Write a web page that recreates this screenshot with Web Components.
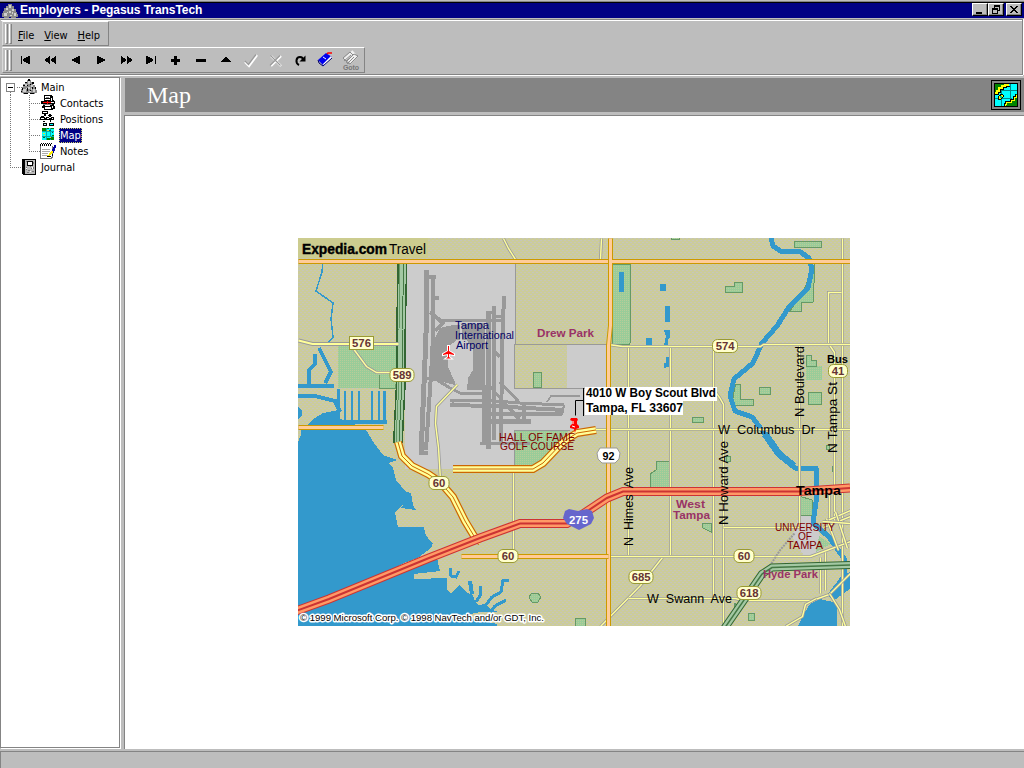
<!DOCTYPE html>
<html lang="en"><head><meta charset="utf-8"><title>Employers - Pegasus TransTech</title>
<style>html,body{margin:0;height:100%;overflow:hidden;background:#bdbdbd}</style></head>
<body><app-window></app-window>
<script>
const define=(name,html,setup)=>customElements.define(name,class extends HTMLElement{
  constructor(){super();this.attachShadow({mode:'open'}).innerHTML=typeof html==='function'?html(this):html;if(setup)setup(this)}
});

/* ---------- icons ---------- */
const S=(w,h,b,extra='')=>`<svg width="${w}" height="${h}" viewBox="0 0 ${w} ${h}" shape-rendering="crispEdges" ${extra}>${b}</svg>`;
const pegs=`<path fill="#8a8a8a" d="M6 1h4v2h2v3h2v3h1v2h1v3h-2v1H9v-1H7v1H2v-1H0v-4h1V8h1V5h2V3h2z"/><path fill="#d0d0d0" d="M7 2h2v3H7zM4 5h2v2H4zM10 6h2v2h-2zM2 10h3v3H2zM7 8h2v2H7zM12 10h2v3h-2zM8 12h2v1H8zM5 9h1v1H5zM10 9h1v2h-1z"/>`;
const art={
 main:pegs+`<path d="M7 0h2v2H7zM4 3h2v1H4zM11 3h2v2h-2zM2 6h2v1H2zM6 6h1v1H6zM9 5h1v1H9zM1 9h1v2H1zM6 9h1v3H6zM11 8h1v2h-1zM14 8h1v2h-1zM3 14h4v1H3zM9 14h4v1H9zM0 12h1v1H0zM9 11h1v1H9z"/>`,
 contacts:`<path d="M3 0h7l2 2v3l2 1v3l-2 1 2 2v2h-2v1H3v-2H1v-2h1V9H0V6h3z"/><path fill="#fff" d="M4 1h5v2H4zM10 3h1v3h-1zM4 4h5v1H4zM4 10h5v1H4zM4 12h6v2H4zM11 11h1v2h-1zM10 7h3v1h-3z"/><path fill="#f00" d="M2 7h8v1H2zM6 6h1v3H6z"/><path fill="#888" d="M2 9h9v1H2zM5 2h3v1H5z"/>`,
 positions:`<path d="M2 0h6v3H2zM4 3h2v2H4zM9 3h2v1h1v1h-1v1H9V5H8V4h1zM1 5h3v1h1v3H0V6h1zM6 6h3v1h1v2H5V7h1zM11 6h3v3h-4V7h1zM3 10h2v1H3zM10 9h1v2h-1zM3 12h4v3H3zM9 12h5v3H9z"/><path fill="#fff" d="M3 1h4v1H3zM1 7h3v1H1zM7 7h2v1H7zM12 7h1v1h-1z"/><path fill="#bff" d="M4 13h2v1H4z"/><path fill="#0ff" d="M10 13h3v1h-3z"/>`,
 map:`<path fill="#0ff" d="M1 1h12v12H1z"/><path fill="#008400" d="M1 1h7v1H5v2H3v1H1zM13 8v5H6v-2h3v-1h2V8zM10 1h3v1h-3z"/><path fill="#08a8aa" d="M5 1h1v12H5zM9 1h1v12H9zM1 4h12v1H1zM1 9h12v1H1z"/><path fill="#dd4" d="M6 3h2v1H6zM2 6h2v1H2zM9 10h1v1H9zM3 8h1v1H3z"/><path fill="#064" d="M8 3h2v1H8zM2 10h2v1H2zM8 11h2v1H8zM11 5h1v1h-1z"/>`,
 notes:`<path fill="#777" d="M0 3h13v11l-2 2H0z"/><path fill="#fff" d="M1 3h11v10l-2 2H1z"/><path fill="#aaa" d="M2 6h8v1H2zM2 8h8v1H2zM2 10h6v1H2zM2 12h5v1H2z"/><path d="M1 0h1v1H1zM3 0h1v1H3zM5 0h1v1H5zM7 0h1v1H7zM9 0h1v1H9zM11 0h1v1h-1zM0 1h1v2H0zM2 1h1v2H2zM4 1h1v2H4zM6 1h1v2H6zM8 1h1v2H8zM10 1h1v2h-1zM7 13h4v1H7zM12 11h1v2h-1z"/><path fill="#fe0" d="M11 8h2v2h-1v1h-1v1h-1v1H7v-1h2v-2h1V9h1z"/><path fill="#0000a4" d="M14 2h2v3h-1v3h-1v2h-1V8h-1V6h1V4h1z"/>`,
 journal:`<path d="M0 0h14v16H1v-1H0z"/><path fill="#bbb" d="M3 1h10v14H3z"/><path fill="#777" d="M4 2h1v1H4zM9 9h1v1H9zM6 11h2v1H6zM4 8h1v3H4zM10 12h2v1h-2zM5 13h2v1H5zM8 7h1v1H8zM11 3h1v2h-1zM11 8h1v2h-1z"/><path d="M5 2h6v5H5z"/><path fill="#fff" d="M6 3h4v3H6zM4 9h1v1H4zM8 12h1v1H8zM10 8h1v2h-1z"/>`
};

define('title-bar',`<style>
:host{display:flex;align-items:center;height:15px;background:#000084;border-top:1px solid #000;box-shadow:0 -1px #848484;margin-top:2px;color:#fff;font:bold 12px "Liberation Sans",sans-serif}
.app{margin:0 2px 0 2px;height:15px}b{letter-spacing:-.05px;flex:1;position:relative;top:-1px}
.btns{display:flex;padding-right:2px;position:relative;top:-1px}.b{width:16px;height:13px;box-sizing:border-box;background:#bdbdbd;border:1px solid;border-color:#fff #000 #000 #fff;box-shadow:inset -1px -1px #848484}.b:last-child{margin-left:2px}svg{display:block}</style>
<svg class="app" width="16" height="15" viewBox="0 0 16 15" shape-rendering="crispEdges">${pegs}</svg><b><slot></slot></b>
<div class="btns"><div class="b">${S(14,11,'<path d="M3 8h6v2H3z"/>')}</div><div class="b">${S(14,11,'<path fill-rule="evenodd" d="M5 1h6v6H9V6h1V3H6v1H5zM3 4h6v6H3zm1 2v3h4V6z"/>')}</div><div class="b">${S(14,11,'<path d="M3 2h2v1h1v1h2V3h1V2h2v1h-1v1H9v1H8v1h1v1h1v1h1v1H9V8H8V7H6v1H5v1H3V8h1V7h1V6h1V5H5V4H4V3H3z"/>')}</div></div>`);

define('tool-band',`<style>
:host{display:flex;align-items:stretch;box-sizing:border-box;width:max-content;border:1px solid;border-color:#fff #848484 #848484 #d8d8d8}
.grip{display:flex;padding:2px 0 1px 2px;width:10px;gap:1px;box-sizing:border-box}.grip i{width:1px;border-left:1px solid #fff;border-right:1px solid #848484;border-bottom:1px solid #848484;background:#bdbdbd}
.body{display:flex;align-items:center}</style><div class="grip"><i></i><i></i></div><div class="body"><slot></slot></div>`);

define('menu-entry',`<style>:host{display:block;font:11px "DejaVu Sans Condensed","DejaVu Sans",sans-serif;color:#000;padding:3px 5px 0;letter-spacing:-.05px}::slotted(u){text-underline-offset:1px}</style><slot></slot>`);

const tools={
 first:'<path d="M8 8h1v8H8zM17 8v8h-2v-1h-2v-1h-2v-1h-1v-2h1v-1h2V9h2V8z"/>',
 rew:'<path d="M12 8v8h-1v-1h-1v-1H8v-1H7v-2h1v-1h2V9h1V8zM18 8v8h-1v-1h-1v-1h-2v-1h-1v-2h1v-1h2V9h1V8z"/>',
 prev:'<path d="M17 8v8h-2v-1h-2v-1h-2v-1H9v-2h2v-1h2V9h2V8z"/>',
 next:'<path d="M9 8v8h2v-1h2v-1h2v-1h2v-2h-2v-1h-2V9h-2V8z"/>',
 ff:'<path d="M8 8v8h1v-1h1v-1h2v-1h1v-2h-1v-1h-2V9H9V8zM14 8v8h1v-1h1v-1h2v-1h1v-2h-1v-1h-2V9h-1V8z"/>',
 last:'<path d="M8 8v8h2v-1h2v-1h2v-1h1v-2h-1v-1h-2V9h-2V8zM17 8h1v8h-1z"/>',
 add:'<path d="M11 8h3v3h3v3h-3v3h-3v-3H8v-3h3z"/>',
 del:'<path d="M8 11h10v3H8z"/>',
 up:'<path d="M12 9h2v1h1v1h1v1h1v1h1v1H8v-1h1v-1h1v-1h1v-1h1z"/>',
 ok:'<g fill="none" shape-rendering="auto"><path stroke="#fff" stroke-width="2.400" d="M7 14l4 4 8-11"/><path stroke="#999" stroke-width="1.300" d="M7 13l3.500 3.500L18 6.500"/></g>',
 no:'<g fill="none" shape-rendering="auto"><path stroke="#fff" stroke-width="2.400" d="M8 8l10 10M18 8L8 18"/><path stroke="#999" stroke-width="1.200" d="M7.500 7.500l10 10M17 7.500l-10 10"/></g>',
 redo:'<g shape-rendering="auto"><path fill="none" stroke="#000" stroke-width="2" d="M11 17c-4-2-3-8 1-8 2 0 3 1 3 3"/><path d="M17.500 7.500v6h-6z"/></g>',
 book:'<g shape-rendering="auto"><path fill="#00e" d="M5 12l8-7 6 4-8 9z"/><path fill="#fff" d="M10 16l8-8 1 2-8 8z"/><path fill="none" stroke="#006" d="M5 12l1 3 4 3 9-8"/><path fill="none" stroke="#f00" stroke-width="1.5" d="M14 6l1-1h4"/><path stroke="#fff" d="M10 9l3 2"/></g>',
 goto:'<g shape-rendering="auto" fill="none" stroke="#8a8a8a"><path stroke="#eee" stroke-width="5" d="M7 12l9-8M11 14l7-7"/><path d="M5 10l7-6 3 3-7 6zM8 14l8-8 4 2-8 8z"/><path d="M6 13l7-6M9 16l7-7"/></g><text x="5" y="22" textLength="16" font-family="Liberation Sans" font-size="7" font-weight="bold" fill="#777">Goto</text>'
};
define('tool-button',h=>`<style>:host{display:block;width:25px;height:24px}svg{display:block}</style>${S(25,24,tools[h.getAttribute('icon')]||'')}`);

define('tree-row',h=>{
 const child=h.hasAttribute('child'),icon=h.getAttribute('icon'),last=h.hasAttribute('last');
 const dot='fill="none" stroke="#777" stroke-dasharray="1 1"';
 let g='';
 if(icon==='main')g=`<path ${dot} d="M16 8.500h5M9.500 13v3"/><path fill="#fff" stroke="#848484" d="M5.500 4.500h8v8h-8z"/><path d="M7 8h5v1H7z"/><g transform="translate(20 0)">${art[icon]}</g>`;
 else if(child)g=`<path ${dot} d="M9.500 0v16M28.500 0v${last?9:16}M30 8.500h10"/><g transform="translate(${icon==='notes'?39:icon==='positions'?39:40} 0)">${art[icon]}</g>`;
 else g=`<path ${dot} d="M9.500 0v9M11 8.500h10"/><g transform="translate(21 0)">${art[icon]}</g>`;
 return `<style>:host{display:flex;height:16px;align-items:center;font:11px "DejaVu Sans Condensed","DejaVu Sans",sans-serif;color:#000}
 svg{display:block;overflow:visible;flex:none}span{height:15px;line-height:15px;padding:0 1px;box-sizing:border-box;letter-spacing:-.05px}
 :host([selected]) span{background:#000084;color:#fff;outline:1px dotted #cc6;outline-offset:-1px;padding:0 1px}</style>${S(child?58:39,16,g)}<span><slot></slot></span>`});

define('nav-tree',`<style>:host{display:block;box-sizing:border-box;background:#fff;border:1px solid #848484;box-shadow:1px 1px #fff;padding-top:1px;margin:0 4px 1px 0}</style><slot></slot>`);

define('pane-header',`<style>:host{display:flex;align-items:center;justify-content:space-between;height:34px;background:#848484;margin:1px 0 3px 1px;color:#fff;font:24px/34px "Liberation Serif",serif}span{padding-left:22px}
.i{width:30px;height:30px;box-sizing:border-box;border:1px solid #000;background:#848484;padding:2px;margin-right:3px}.i svg{display:block;border:1px solid #000}</style><span><slot></slot></span>
<div class="i">${S(22,22,`<path fill="#0ff" d="M0 0h22v22H0z"/><path fill="#008400" d="M0 0h14v1h-3v1H7v2H4v2H2v3H0zM22 10v12H9v-2h2v-2h4v-2h3v-3h2v-3z"/><path fill="#088" d="M6 3h1v19H6zM15 0h1v17h-1zM4 6h18v1H4zM0 14h17v1H0z"/><path fill="none" stroke="#ff0" stroke-width="1.500" d="M14 1h-4v1H7v2H4v3H2v2H0M21 11v2h-2v3h-3v2h-5v2h-1v2"/><path fill="none" stroke="#000" d="M15 2h-4v1H8v2H5v3H3v2H0M20 10v2h-2v3h-3v2h-5v2H9v3"/><path fill="#ff0" stroke="#000" d="M3 13l4-3 1 1v2l-3 3-2-1z"/><path fill="#0c8" d="M5 12h2v2H5z"/>`)}</div>`);

define('status-bar',`<style>:host{display:block;height:17px;box-sizing:border-box;margin-top:2px;border:1px solid #848484;border-width:1px 0 0 1px;background:#bdbdbd}</style>`);

/* ---------- street map ---------- */
const line=(d,c,w,x='')=>`<path d="${d}" fill="none" stroke="${c}" stroke-width="${w}" ${x}/>`;
const road=d=>line(d,'#999',3)+line(d,'#ffff99',1.4);
const streets=[
 'M503 238L508 248L515 259','M601 238L600 259','M628 345V556','M670 346V556','M713 350V600','M714 390L719 397L723 404V626','M799 344V527','M842 238V626','M841 292H828V343L834 352V520','M723 527H799','M513 465V556','M662 557L640 585L600 626','M608 556H810L850 541','M628 598H735L742 600H812L829 594L850 573','M352 347L366 366L376 372H394','M608 344L622 346H760L763 344H850','M594 429H850','M820 557V593M825 552V590','M829 495V521','M825 521L850 510M823 527L850 516','M835 511L847 548','M826 518L838 550','M822 521L850 523','M829 593L839 609L845 626','M785 626L802 616L805 604L816 598','M440 480L438 447L435 423L436 406L457 384'
].map(road).join('');
const orange=d=>line(d,'#cc9900',5)+line(d,'#ffcc99',3);
const lake='#3399cc',pk='fill="url(#park)" stroke="#669966"';
const T=(x,y,w,s,t,c='#000',a='')=>`<text x="${x}" y="${y}" textLength="${w}" lengthAdjust="spacingAndGlyphs" font-size="${s}" fill="${c}" ${a}>${t}</text>`;
const B='font-weight="bold"',halo='stroke="#fff" stroke-width="3" paint-order="stroke" stroke-linejoin="round"';
const shield=(x,y,t,w)=>`<rect x="${x-w/2}" y="${y-6.5}" width="${w}" height="13" rx="5" fill="#ffffcc" stroke="#999933"/>`+T(x-t.length*3.1,y+4,t.length*6.3,11,t,'#663333',B);
const ways=[
 [5,'M426.500 270V320L425 360L421 455'],[4,'M433 276V340L431 375L426 450'],[4,'M428 277H436M420 453H428M434 298H439M430 312L443 323'],
 [3,'M440 320H503M435 331L444 322M486 312H495M492 316H504'],
 [3,'M427 378L437 380L450 388L460 393L486 394'],
 [5,'M488 312V449M484 385V444'],[4,'M494 306V440M504 296L502 350L501 442'],[3,'M495 352L500 357M480 443H530'],
 [3,'M500 382L518 401M488 384L520 421M500 400L520 418'],
 [3,'M450 400H484L520 403L564 405'],[4,'M450 405L490 406L564 410M484 414L562 414M524 402V421'],[5,'M482 421H531'],[1.5,'M547 402L551 396H580'],[2,'M564 405L562 415M453 399V407']
].map(([w,d])=>line(d,'#999',w)).join('');
define('street-map',`<style>:host{display:block;width:552px;height:388px}svg{display:block}text{white-space:pre}</style>
<svg width="552" height="388" viewBox="298 238 552 388" font-family="Liberation Sans,sans-serif"><defs>
<pattern id="land" width="4" height="4" patternUnits="userSpaceOnUse"><path fill="#cccc99" d="M0 0h4v4H0z"/><path fill="#c6c6bb" d="M0 0h2v1H0zM2 2h2v1H2z"/></pattern>
<pattern id="park" width="2" height="2" patternUnits="userSpaceOnUse"><path fill="#99cc99" d="M0 0h2v2H0z"/><path fill="#b8cc99" d="M0 0h1v1H0z"/></pattern></defs>
<g shape-rendering="crispEdges"><path fill="url(#land)" d="M298 238h552v388H298z"/>
<path fill="#ccc" d="M405 262H515V344H608V430H515V469H405zM799 516H812L822 540L819 553L805 557L792 537z"/>
<path fill="url(#land)" d="M515 262H608V344H515zM514 344H567V388H514z"/><path fill="none" stroke="#999" d="M515.500 262V344.500H608M514.500 344V388.500H580L608 390M514.500 469V430.500H570"/>
<path fill="url(#park)" d="M338 345h60v43h-60zM515 431H568L558 443L545 459L534 466H515zM806 366h16v14h-16zM816 552l3-16 12 8z"/>
<path ${pk} d="M612 264H631L630 344H612zM533.500 372.500h8v15h-8zM794.500 241.500h27v6h-27zM725.500 286.500h9v-4h8v10h-17zM808.500 392.500h13v12h-13zM806.500 355.500h5v5h5v6h-10zM759.500 387.500h11v7h-11zM692.500 417.500h11v5h-11zM735.500 384.500h5v15h13v6h-22zM671 461H656V470L650 474V487H671zM529 597l3-4h6l3 4-3 5h-6zM575.500 618.500h10v8h-10zM702 523h9v9l-8-4zM799 496l13 4v15h-13zM748.500 613.500h6v7h-6zM815 264l-2 38-12 1v8h-11l12-17zM671 235h8v4h-8zM826.500 445v4h3v-4zM832 466v5h3v-5zM726 456h4v5h-4zM379 375v13h16v-4M735 603l6 8-7 4z"/>
<path fill="#999" d="M440 328L453 325L485 323V390H467L468 378L473 370V350L467 340H457L448 347V367L455 382V385L443 382L432 377L430 347z"/><path fill="none" stroke="#ccc" stroke-width="2" d="M461 325V340"/>${ways}
<g fill="${lake}"><path d="M298 442L301 435V430H366L374 443L383 455L391 458L398 460L388 463L393 468L396 480L406 492L411 493L413 505L416 510L401 508L403 505L395 512L398 527L424 527L425 533L429 540L433 543L431 548L419 557L412 563L437 558L440 571L414 574V579L447 578V590L451 593L459 585L466 592L473 595L475 602L479 605L485 604L490 609L498 612H480L470 614L468 618L497 624V626H298z"/>
<path d="M306 426L312 420L323 413L339 410V418L351 424L368 426zM298 407L302 410V416L298 419zM619 272h5v20h-5zM660 284h6v7h-6zM665 306h5v16h-5zM646 338h6v7h-6zM664 330h6v7l-2 3v5h-4l2-9zM664 368v-5h2v-6h4v9zM805 612l5-8 10-5 17 4v23H798zM850 572l-10 6-13 17 6 6 17-12z"/>
<path d="M337 389h3v32h-3zM344 391h2v30h-2zM351 391h2v30h-2zM358 391h2v32h-2zM371 391h2v32h-2zM378 391h2v32h-2zM383 391h3v32h-3zM339 420h48v4h-48z"/></g>
${line('M323 262L322 272L316 291L333 303L331 319L333 337L328 343H319',lake,1.5)}
${line('M319 348L324 358L331 372L325 383M315 354V364L309 370V385M298 386H334M298 396L315 396L335 401L340 412',lake,4)}
${line('M771 238L773 246L782 252L799 251L809 258L812 269L808 288L789 307L777 326L762 343L753 363L734 379L730 396L735 411L752 417L765 434L777 453L795 468H816L817 495L813 523L829 537L845 560L844 576L831 597',lake,5,'stroke-linejoin="round"')}
${line('M765 434L779 454L794 466',lake,7)}
${line('M450 568L451 576L456 577L459 571M480 586L481 594L476 602M486 605L492 597L501 592L503 580H509M506 600L495 606L490 612',lake,3)}${line('M470 581L472 594',lake,4)}
<path fill="url(#land)" d="M385 573L404 563L428 554V557L387 575z"/>
<g>${line('M402.500 262L401 330V380L399 420L398 443','#336633',10)}${line('M402.500 262L401 330V380L399 420L398 443','#a3c8a3',7)}${line('M404 262L402 330V380L400 420L399 443','#447744',1)}${line('M400 262L399 330V380L397 420L396 443','#669966',1)}</g>
<g transform="translate(.5 .5)" shape-rendering="auto">${line('M298 340L312 343.500H398','#999',4)}${line('M298 340L312 343.500H398','#ffff99',2)}
${streets}${line('M794 533L780 549L765 572','#999',2,'stroke-dasharray="2 1"')}
${orange('M298 261H850')}${orange('M610 238V325L608 345V626')}${orange('M461 556H608')}${orange('M298 427H383')}
<path fill="#ffcc99" d="M608.500 259.500h4v3h-4z"/></g>
<g shape-rendering="auto">${['M398 442L402 456L412 466L428 474L440 482L453 497L465 521L474 536L481 542','M453 469H533L543 463L563 442L577 433L596 430'].map(d=>line(d,'#cc6600',8)+line(d,'#ffff99',5.6)+line(d,'#cc6600',1)).join('')}
${(d=>line(d,'#336633',8)+line(d,'#a3c8a3',6)+line(d,'#447744',1.5))('M724 629L762 574L772 567.500L850 565')}
${(d=>line(d,'#cc3333',9)+line(d,'#ff9966',7)+line(d,'#cc3333',2))('M296 611L329 599L429 558L480 538L520 523.500H567L583 514L607 498L623 491.500H799L850 488')}</g>
<path fill="#cccc8f" d="M298 238h130v20H298z"/></g>
${T(302,254,85,14,'Expedia.com','#000','font-weight="bold" stroke="#000" stroke-width=".4"')}${T(389,254,37,14,'Travel')}
<rect x="349.500" y="336.500" width="24" height="13" fill="#ffffcc" stroke="#999933"/>${T(352,347,19,11,'576','#663333',B)}
${shield(402,375,'589',24)}${shield(725,346,'574',25)}${shield(838,371,'41',19)}${shield(439,483,'60',20)}${shield(508,556,'60',20)}${shield(744,556,'60',20)}${shield(641,577,'685',24)}${shield(749,593,'618',24)}
<path fill="#fff" stroke="#999" d="M600 448h17l3 5-1 6-4 4h-13l-4-4-1-6z"/>${T(602.500,460,12,11,'92','#000',B)}
<path fill="#6666cc" d="M565 511l4-2 9 2 9-2 5 2 2 7-3 6-12 6-12-6-4-6z"/>${T(569,524,19,11,'275','#fff',B)}
<g>${T(455,329,34,10,'Tampa','#000066')}${T(455,339,59,10,'International','#000066')}${T(456,349,32,10,'Airport','#000066')}</g>
${T(537,337,57,11,'Drew Park','#993366',B)}${T(676,508,29,11,'West','#993366',B)}${T(673,519,37,11,'Tampa','#993366',B)}${T(763,578,55,11,'Hyde Park','#993366',B)}
${T(499,441,76,10.5,'HALL OF FAME','#800000')}${T(500,450,74,10.5,'GOLF COURSE','#800000')}
${T(775,531,60,10.5,'UNIVERSITY','#800000')}${T(798,540,14,10.5,'OF','#800000')}${T(787,549,36,10.5,'TAMPA','#800000')}
${T(718,434,97,12.5,'W  Columbus  Dr')}${T(647,603,85,12.5,'W  Swann  Ave')}
${T(0,0,79,12.5,'N  Himes  Ave','#000','transform="translate(633 546) rotate(-90)"')}
${T(0,0,84,12.5,'N Howard Ave','#000','transform="translate(728 525) rotate(-90)"')}
${T(0,0,71,12.5,'N Boulevard','#000','transform="translate(804 417) rotate(-90)"')}
${T(0,0,71,12.5,'N Tampa St','#000','transform="translate(837 453) rotate(-90)"')}
${T(827,363,21,11,'Bus','#000',B)}${T(796,495,45,13.5,'Tampa','#000',B)}
<path fill="none" stroke="#000" d="M583.500 388v28M583 400.500h-7.500v15"/>
<path fill="#fff" d="M585 387h132v14h-34v14h-98z"/>${T(586,397,130,12,'4010 W Boy Scout Blvd','#000',B)}${T(586,412,97,12,'Tampa, FL 33607','#000',B)}
<path fill="#f00" stroke="#fff" stroke-width="2" paint-order="stroke" d="M448 346h1v5l5 3v1l-5-1v3l2 1.500h-5l2-1.500v-3l-5 1v-1l5-3z"/>
<path fill="#f00" d="M571 418h6l1 2-1 1v3l2 2v2l-3 1-1 4-1-4-4-1v-2l2-2v-3l-2-1z"/><path stroke="#fff" d="M573 421v3M572 426l3 1"/>
${T(300,621,244,9.5,'© 1999 Microsoft Corp. © 1998 NavTech and/or GDT, Inc.','#000',halo)}
</svg>`);

define('app-window',`<style>
:host{display:flex;flex-direction:column;width:1024px;height:768px;background:#bdbdbd;overflow:hidden}
title-bar{flex:none}.bars{height:56px;box-sizing:border-box;border:1px solid #848484;box-shadow:inset 0 1px #fff,0 1px #fff,1px 0 #fff;margin:1px 1px 0 0;padding:1px 0 0 1px;border-left-color:#bdbdbd;flex:none}
.menus{height:25px;width:107px}.tools{height:26px;margin-top:1px;width:363px}.work{flex:1;display:grid;grid-template-columns:124px 1fr;min-height:0;margin-top:2px}
.right{display:flex;flex-direction:column;min-width:0}.canvas{flex:1;border:1px solid #848484;border-width:1px 0 0 1px;background:#fff;display:flex;align-items:flex-start;padding:122px 0 0 173px;min-height:0;box-sizing:border-box}
status-bar{flex:none}</style>
<title-bar>Employers - Pegasus TransTech</title-bar>
<div class="bars"><tool-band class="menus"><menu-entry><u>F</u>ile</menu-entry><menu-entry><u>V</u>iew</menu-entry><menu-entry><u>H</u>elp</menu-entry></tool-band>
<tool-band class="tools">${Object.keys(tools).map(k=>`<tool-button icon="${k}"></tool-button>`).join('')}</tool-band></div>
<div class="work"><nav-tree><tree-row icon="main">Main</tree-row><tree-row child icon="contacts">Contacts</tree-row><tree-row child icon="positions">Positions</tree-row><tree-row child selected icon="map">Map</tree-row><tree-row child last icon="notes">Notes</tree-row><tree-row icon="journal">Journal</tree-row></nav-tree>
<div class="right"><pane-header>Map</pane-header><div class="canvas"><street-map></street-map></div></div></div><status-bar></status-bar>`);
</script></body></html>
